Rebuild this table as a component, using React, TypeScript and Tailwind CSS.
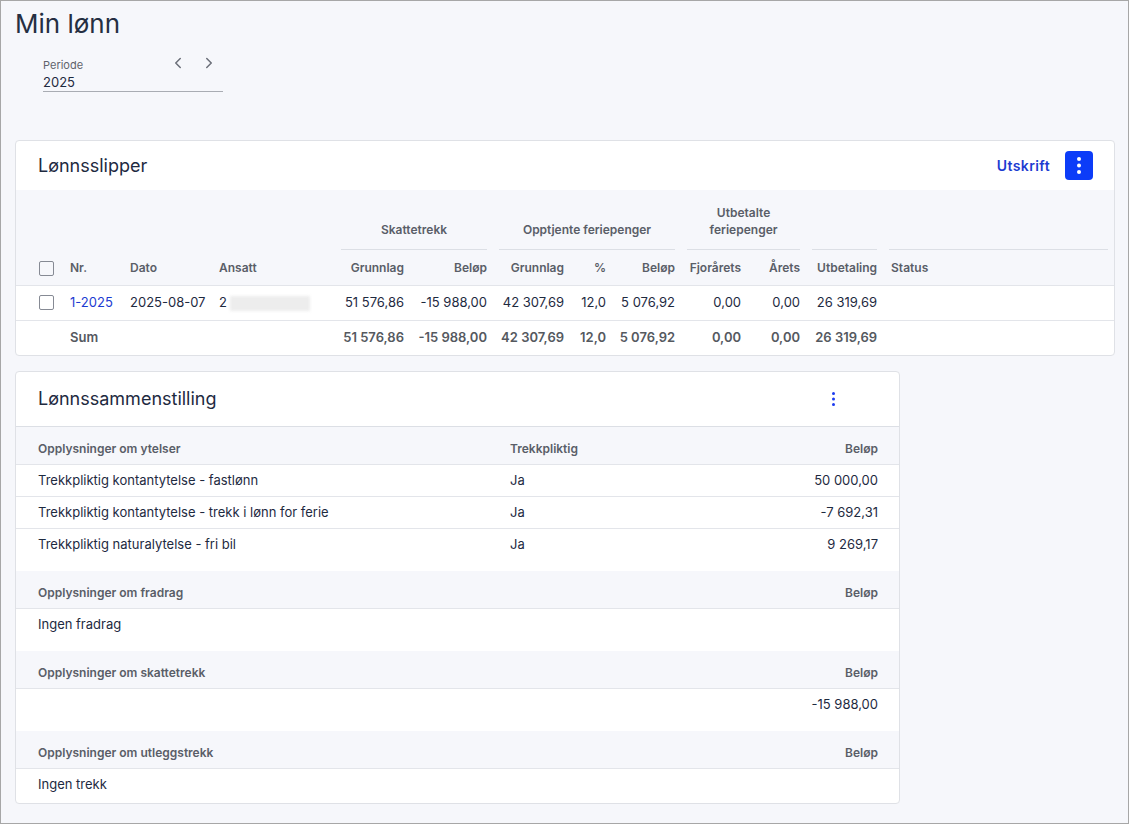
import { ChevronLeft, ChevronRight } from "lucide-react";

const font = { fontFamily: "Inter, 'Noto Sans', sans-serif" };

function Kebab({ dot, gap, color }: { dot: number; gap: number; color: string }) {
  return (
    <svg width={dot} height={dot * 3 + gap * 2} viewBox={`0 0 ${dot} ${dot * 3 + gap * 2}`}>
      {[0, 1, 2].map((i) => (
        <circle key={i} cx={dot / 2} cy={dot / 2 + i * (dot + gap)} r={dot / 2} fill={color} />
      ))}
    </svg>
  );
}

function Checkbox() {
  return <div className="w-[15px] h-[15px] rounded-[2px] border border-[#868a94] bg-transparent" />;
}

const cols = [46, 62, 89, 122, 75, 83, 77, 42, 69, 66, 59, 77, 231];

function GroupCell({ children, span = 1, line = true }: { children?: React.ReactNode; span?: number; line?: boolean }) {
  return (
    <th colSpan={span} className="px-[6px] align-bottom font-semibold">
      <div
        className={
          "pb-[11px] text-center text-[12px] leading-[17px] text-[#5a5e68] " +
          (line ? "border-b border-[#dcdfe5]" : "")
        }
      >
        {children}
      </div>
    </th>
  );
}

function Payslips() {
  const head = "text-[12px] font-semibold text-[#5a5e68] h-[35px] pt-[2px] px-[6px] align-middle";
  const cell = "text-[13px] h-[35px] px-[6px] align-middle whitespace-nowrap";
  const sum = "text-[13px] font-semibold text-[#55595f] h-[35px] px-[6px] align-middle whitespace-nowrap";
  const dark = " text-[#1e2a3f]";
  return (
    <div className="mt-[48px] mr-[-1px] bg-white border border-[#dfe1e6] rounded-[4px] overflow-hidden">
      <div className="h-[49px] flex items-center justify-between pl-[22px] pr-[21px]">
        <h2 className="text-[18px] text-[#1e2a3f] leading-[24px]">Lønnsslipper</h2>
        <div className="flex items-center gap-[15px]">
          <button className="text-[14px] font-semibold text-[#1c3bd1] tracking-[0.4px]">Utskrift</button>
          <button className="w-[28px] h-[29px] rounded-[4px] bg-[#0c3cf8] flex items-center justify-center">
            <Kebab dot={4} gap={2.5} color="#ffffff" />
          </button>
        </div>
      </div>
      <table className="w-full border-collapse table-fixed">
        <colgroup>
          {cols.map((w, i) => (
            <col key={i} style={{ width: w }} />
          ))}
        </colgroup>
        <thead className="bg-[#f6f7fb]">
          <tr className="h-[60px]">
            <GroupCell line={false} />
            <GroupCell line={false} />
            <GroupCell line={false} />
            <GroupCell line={false} />
            <GroupCell span={2}>Skattetrekk</GroupCell>
            <GroupCell span={3}>Opptjente feriepenger</GroupCell>
            <GroupCell span={2}>
              Utbetalte
              <br />
              feriepenger
            </GroupCell>
            <GroupCell>&nbsp;</GroupCell>
            <GroupCell>&nbsp;</GroupCell>
          </tr>
          <tr className="border-b border-[#e3e5ea]">
            <th className="h-[35px] pt-[2px] pl-[23px] align-middle">
              <Checkbox />
            </th>
            <th className={head + " text-left pl-[8px]"}>Nr.</th>
            <th className={head + " text-left"}>Dato</th>
            <th className={head + " text-left"}>Ansatt</th>
            <th className={head + " text-right"}>Grunnlag</th>
            <th className={head + " text-right"}>Beløp</th>
            <th className={head + " text-right"}>Grunnlag</th>
            <th className={head + " text-right"}>%</th>
            <th className={head + " text-right"}>Beløp</th>
            <th className={head + " text-right"}>Fjorårets</th>
            <th className={head + " text-right"}>Årets</th>
            <th className={head + " text-right"}>Utbetaling</th>
            <th className={head + " text-left pl-[8px]"}>Status</th>
          </tr>
        </thead>
        <tbody>
          <tr className="border-b border-[#e3e5ea]">
            <td className="h-[35px] pl-[23px] align-middle">
              <Checkbox />
            </td>
            <td className={cell + " pl-[8px] text-[#1c3bd1]"}>1-2025</td>
            <td className={cell + dark}>2025-08-07</td>
            <td className={cell + dark}>
              <span>2</span>
              <span className="inline-block align-middle ml-[3px] w-[80px] h-[15px] bg-[#ededed] blur-[1.5px]" />
            </td>
            <td className={cell + dark + " text-right"}>51 576,86</td>
            <td className={cell + dark + " text-right"}>-15 988,00</td>
            <td className={cell + dark + " text-right"}>42 307,69</td>
            <td className={cell + dark + " text-right"}>12,0</td>
            <td className={cell + dark + " text-right"}>5 076,92</td>
            <td className={cell + dark + " text-right"}>0,00</td>
            <td className={cell + dark + " text-right"}>0,00</td>
            <td className={cell + dark + " text-right"}>26 319,69</td>
            <td className={cell} />
          </tr>
          <tr>
            <td />
            <td className={sum + " pl-[8px]"}>Sum</td>
            <td />
            <td />
            <td className={sum + " text-right"}>51 576,86</td>
            <td className={sum + " text-right"}>-15 988,00</td>
            <td className={sum + " text-right"}>42 307,69</td>
            <td className={sum + " text-right"}>12,0</td>
            <td className={sum + " text-right"}>5 076,92</td>
            <td className={sum + " text-right"}>0,00</td>
            <td className={sum + " text-right"}>0,00</td>
            <td className={sum + " text-right"}>26 319,69</td>
            <td />
          </tr>
        </tbody>
      </table>
    </div>
  );
}

type Row = { label: string; trekk?: string; amount?: string };

function Section({
  title,
  trekk,
  rows,
  last = false,
}: {
  title: string;
  trekk?: boolean;
  rows: Row[];
  last?: boolean;
}) {
  return (
    <div className={last ? "pb-[2px]" : "pb-[10px]"}>
      <div className="h-[38px] pt-[7px] bg-[#f6f7fb] border-b border-[#e3e5ea] flex items-center pl-[22px] pr-[21px] text-[12px] font-semibold text-[#5a5e68]">
        <div className="w-[472px]">{title}</div>
        <div className="flex-1">{trekk ? "Trekkpliktig" : ""}</div>
        <div className="text-right">Beløp</div>
      </div>
      {rows.map((r, i) => (
        <div
          key={i}
          className={
            "h-[32px] flex items-center pl-[22px] pr-[21px] text-[13px] text-[#1e2a3f] " +
            (i < rows.length - 1 ? "border-b border-[#e3e5ea]" : "")
          }
        >
          <div className="w-[472px]">{r.label}</div>
          <div className="flex-1">{r.trekk ?? ""}</div>
          <div className="text-right">{r.amount ?? ""}</div>
        </div>
      ))}
    </div>
  );
}

function Summary() {
  return (
    <div className="mt-[15px] w-[885px] bg-white border border-[#dfe1e6] rounded-[4px] overflow-hidden">
      <div className="h-[55px] flex items-center justify-between pl-[22px] pr-[54px] border-b border-[#dcdfe5]">
        <h2 className="text-[18px] text-[#1e2a3f] leading-[24px]">Lønnssammenstilling</h2>
        <button className="w-[24px] h-[24px] flex items-center justify-center">
          <Kebab dot={3} gap={2.5} color="#1c3bf0" />
        </button>
      </div>
      <Section
        title="Opplysninger om ytelser"
        trekk
        rows={[
          { label: "Trekkpliktig kontantytelse - fastlønn", trekk: "Ja", amount: "50 000,00" },
          { label: "Trekkpliktig kontantytelse - trekk i lønn for ferie", trekk: "Ja", amount: "-7 692,31" },
          { label: "Trekkpliktig naturalytelse - fri bil", trekk: "Ja", amount: "9 269,17" },
        ]}
      />
      <Section title="Opplysninger om fradrag" rows={[{ label: "Ingen fradrag" }]} />
      <Section title="Opplysninger om skattetrekk" rows={[{ label: "", amount: "-15 988,00" }]} />
      <Section title="Opplysninger om utleggstrekk" rows={[{ label: "Ingen trekk" }]} last />
    </div>
  );
}

export default function App() {
  return (
    <div
      className="h-[824px] w-full border border-[#a7a7a7] bg-[#f6f7fb] pt-[7px] pl-[14px] pr-[14px] overflow-hidden"
      style={font}
    >
      <h1 className="text-[26px] leading-[32px] text-[#252f42]">Min lønn</h1>
      <div className="mt-[14px] ml-[28px] w-[180px]">
        <div className="flex items-start justify-between pr-[5px]">
          <span className="pt-[4px] text-[11px] leading-[14px] text-[#5f636c]">Periode</span>
          <div className="flex gap-[13px] text-[#6b6f79]">
            <button className="w-[18px] h-[18px] flex items-center justify-center">
              <ChevronLeft size={18} strokeWidth={2} />
            </button>
            <button className="w-[18px] h-[18px] flex items-center justify-center">
              <ChevronRight size={18} strokeWidth={2} />
            </button>
          </div>
        </div>
        <div className="mt-[1px] text-[13px] leading-[18px] text-[#1e2a3f] border-b border-[#a9acb3]">2025</div>
      </div>
      <Payslips />
      <Summary />
    </div>
  );
}
